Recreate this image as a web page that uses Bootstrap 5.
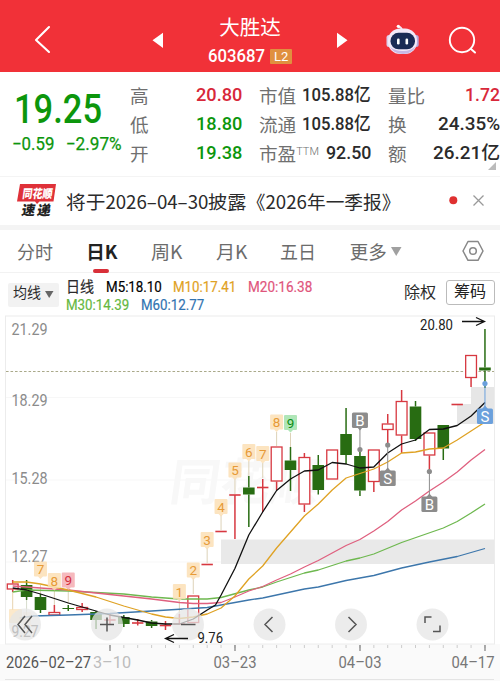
<!DOCTYPE html>
<html lang="zh-CN">
<head>
<meta charset="utf-8">
<meta name="viewport" content="width=device-width, initial-scale=1">
<title>大胜达 603687</title>
<link rel="stylesheet" href="https://cdn.jsdelivr.net/npm/bootstrap@5.3.0/dist/css/bootstrap.min.css">
<style>
body{font-family:Roboto,"Noto Sans CJK SC",sans-serif;width:500px;height:681px;overflow:hidden;color:#2b2b2b;background:#fff;line-height:1}
svg{display:block;flex:none}
.fit{display:inline-block;white-space:nowrap;transform-origin:0 50%}
.topbar{height:72px;background:#f13138;color:#fff;display:grid;grid-template-columns:150px 200px 150px}
.title-main{font-size:20.5px;height:28px;line-height:28px;margin-top:14px}
.code-row{font-size:18.5px;height:29px;font-weight:500}
.lv{background:#e0903f;width:22px;height:15px;font-size:13px;font-weight:400;margin-left:5px;border-radius:1px}
.quotes{height:104px;display:grid;grid-template-columns:130px 129px 129px 112px;padding-top:9px}
.qcol{width:112px}
.qrow{height:29px;font-size:18.6px}
.qrow .k{color:#707070;font-family:"Noto Sans CJK SC",sans-serif}
.qrow .v{font-weight:500}
.qrow sup{font-size:11px;top:-.55em;font-weight:300;font-family:Roboto,sans-serif}
.up{color:#d8283a}.down{color:#0c960c}
.price{font-size:40px;font-weight:500;height:46px;line-height:46px;margin:6px 0 0 14px}
.chg{font-size:18px;font-weight:400;-webkit-text-stroke:.25px;height:24px;line-height:24px;margin:-1px 0 0 12px}
.news{height:49px;border-top:1px solid #f4f4f4;font-family:"Noto Sans CJK SC",sans-serif;font-size:18.7px;padding-left:16px}
.band{height:5px;background:#f4f4f4}
.tabs{height:43px;border-bottom:1px solid #f2f2f2;font-family:"Noto Sans CJK SC",sans-serif;font-size:18.5px;color:#6c6c6c;gap:33.3px;padding-left:17px}
.tabs .cur{color:#222;font-weight:700;height:43px}
.cur-bar{left:7px;bottom:0;width:16px;height:4px;border-radius:2px;background:#d92f39}
.legend-row{height:42px;font-size:15px;padding-left:8px}
.ma-btn{width:51px;height:24px;background:#f2f2f2;font-size:14.5px;border-radius:2px;margin-top:1px}
.ma-list{margin-left:7px;width:260px;height:40px;padding-top:4px;-webkit-text-stroke:.2px}
.ma-list>div{height:18.5px;gap:11.5px}
.chip{width:49px;height:25px;border:1px solid #bbb;border-radius:3px;font-size:15.6px;color:#222;margin-right:5px;margin-top:-3px}
.adj{font-size:15.6px;margin-right:10px}
</style>
<script src="https://cdn.jsdelivr.net/npm/bootstrap@5.3.0/dist/js/bootstrap.bundle.min.js"></script>
</head>
<body>
<header class="topbar">
  <svg width="200" height="72" overflow="visible"><path d="M49 27 36 40 49 52" fill="none" stroke="#fff" stroke-width="2.1" stroke-linecap="round" stroke-linejoin="round"/><path d="M152.500 40.300 163 32.800V48z" fill="#fff"/></svg>
  <div class="text-center">
    <div class="title-main"><span class="fit" data-w="62">大胜达</span></div>
    <div class="code-row d-flex align-items-center justify-content-center"><span class="fit" data-w="57">603687</span><span class="lv d-flex align-items-center justify-content-center">L2</span></div>
  </div>
  <svg width="150" height="72" viewBox="350 0 150 72" overflow="visible">
    <path d="M347.500 40.300 337 32.800V48z" fill="#fff"/>
    <path d="M402 31Q402 27 398 26.500" stroke="#f4e3f3" stroke-width="1.800" fill="none"/><circle cx="398.300" cy="26.300" r="1.600" fill="#fff"/>
    <rect x="386.500" y="35" width="5" height="12" rx="2.500" fill="#ddd1ed"/><rect x="413.700" y="35" width="5" height="12" rx="2.500" fill="#b8a9dd"/>
    <rect x="388" y="28.500" width="29" height="25.500" rx="12" fill="#f3e9f8"/><path d="M390 47Q394 54 403 54T416 46Q411 51 403 51T390 47" fill="#c8b8e5"/>
    <rect x="390.500" y="32.800" width="24.500" height="16.500" rx="8" fill="#1b2b55"/>
    <rect x="397" y="38.500" width="2.600" height="6" rx="1.200" fill="#fff"/><rect x="405.500" y="38.500" width="2.600" height="6" rx="1.200" fill="#fff"/>
    <circle cx="462" cy="40" r="12.200" fill="none" stroke="#fff" stroke-width="1.900"/><path d="m471 49 4 3.500" stroke="#fff" stroke-width="2" stroke-linecap="round"/>
  </svg>
</header>

<section class="quotes">
  <div>
    <div class="price down"><span class="fit" data-w="88">19.25</span></div>
    <div class="chg down d-flex"><span class="fit" data-w="42">−0.59</span><span class="fit ms-2 ps-1" data-w="60">−2.97%</span></div>
  </div>
  <div class="qcol">
    <div class="qrow d-flex align-items-center justify-content-between"><span class="k">高</span><span class="v up fit" data-w="46">20.80</span></div>
    <div class="qrow d-flex align-items-center justify-content-between"><span class="k">低</span><span class="v down fit" data-w="46">18.80</span></div>
    <div class="qrow d-flex align-items-center justify-content-between"><span class="k">开</span><span class="v down fit" data-w="46">19.38</span></div>
  </div>
  <div class="qcol">
    <div class="qrow d-flex align-items-center justify-content-between"><span class="k">市值</span><span class="v fit" data-w="69">105.88亿</span></div>
    <div class="qrow d-flex align-items-center justify-content-between"><span class="k">流通</span><span class="v fit" data-w="69">105.88亿</span></div>
    <div class="qrow d-flex align-items-center justify-content-between"><span class="k">市盈<sup>TTM</sup></span><span class="v fit" data-w="45">92.50</span></div>
  </div>
  <div class="qcol position-relative">
    <div class="qrow d-flex align-items-center justify-content-between"><span class="k">量比</span><span class="v up fit" data-w="35">1.72</span></div>
    <div class="qrow d-flex align-items-center justify-content-between"><span class="k">换</span><span class="v fit" data-w="62">24.35%</span></div>
    <div class="qrow d-flex align-items-center justify-content-between"><span class="k">额</span><span class="v fit" data-w="67">26.21亿</span></div>
    <svg class="position-absolute end-0 bottom-0 mb-1 me-1" width="8" height="10"><path d="M8 0V8H0z" fill="#bbb"/></svg>
  </div>
</section>

<section class="news d-flex align-items-center">
  <svg width="50" height="40" viewBox="16 181 50 40" font-family="Noto Sans CJK SC, sans-serif" font-weight="900">
    <path d="M20 184H56L53.500 201.500H39.500L37 204 35 201.500H17z" fill="#df3139"/>
    <text x="22" y="0" transform="translate(36 198) skewX(-8) translate(-36)" font-size="12" fill="#fff" textLength="30" lengthAdjust="spacingAndGlyphs">同花顺</text>
    <text x="21" y="0" transform="translate(0 215) skewX(-10)" font-size="13.500" fill="#222" textLength="29" lengthAdjust="spacing">速递</text>
  </svg>
  <span class="fit" data-w="39">将于</span><span class="fit" data-w="103">2026–04–30</span><span class="fit" data-w="38">披露</span><span class="fit" data-w="19">《</span><span class="fit" data-w="42">2026</span><span class="fit" data-w="75">年一季报</span><span class="fit" data-w="19">》</span>
  <svg class="ms-auto" width="60" height="40" viewBox="440 181 60 40"><circle cx="453.300" cy="200.300" r="4" fill="#df3030"/><path d="m473.500 195.500 10 10m0-10-10 10" stroke="#999" stroke-width="1.300"/></svg>
</section>
<div class="band"></div>

<nav class="tabs d-flex align-items-center">
  <span class="fit" data-w="36">分时</span>
  <span class="cur position-relative d-flex align-items-center"><span class="fit" data-w="31">日K</span><i class="cur-bar position-absolute"></i></span>
  <span class="fit" data-w="31">周K</span>
  <span class="fit" data-w="31">月K</span>
  <span class="fit" data-w="36">五日</span>
  <span class="d-flex align-items-center"><span class="fit" data-w="37">更多</span><svg class="ms-1" width="11" height="9"><path d="M0 0H10.500L5.200 9z" fill="#a0a0a0"/></svg></span>
  <svg class="ms-auto" width="38" height="24" viewBox="462 240 38 24" fill="none" stroke="#888" stroke-width="1.500" stroke-linejoin="round"><path d="M468 242.500H478L483 252 478 261.300H468L463 252z"/><circle cx="473" cy="252" r="3.300"/></svg>
</nav>

<section class="legend-row d-flex align-items-center">
  <div class="ma-btn d-flex align-items-center justify-content-center"><span class="fit" data-w="28">均线</span><svg class="ms-1" width="9" height="7"><path d="M0 0H8.500L4.200 7z" fill="#666"/></svg></div>
  <div class="ma-list" id="maList">
    <div class="d-flex align-items-center"><span class="fit" data-w="28">日线</span><span class="fit text-black" data-w="56">M5:18.10</span><span class="fit" data-w="63" data-ma="1">M10:17.41</span><span class="fit" data-w="64" data-ma="2">M20:16.38</span></div>
    <div class="d-flex align-items-center"><span class="fit" data-w="63" data-ma="3">M30:14.39</span><span class="fit" data-w="63" data-ma="4">M60:12.77</span></div>
  </div>
  <span class="ms-auto adj"><span class="fit" data-w="32">除权</span></span>
  <div class="chip d-flex align-items-center justify-content-center"><span class="fit" data-w="32">筹码</span></div>
</section>

<svg id="chart" width="500" height="366" viewBox="0 315 500 366" font-family="Roboto, 'Noto Sans CJK SC', sans-serif"></svg>

<script>
const maColors = ['#111', '#dfa224', '#df607f', '#6eb84f', '#3c76ab'];
document.querySelectorAll('[data-ma]').forEach(e => e.style.color = ['', '#dfa224', '#df557c', '#65b83f', '#3173b1'][e.dataset.ma]);
document.querySelectorAll('.fit').forEach(e => {
  const w = e.offsetWidth, t = +e.dataset.w;
  e.style.flex = 'none';
  e.style.transform = `scaleX(${t / w})`;
  e.style.marginRight = (t - w) + 'px';
});

let out = '';
const X = i => 12.7 + 13.89 * i;
const line = (x1, y1, x2, y2, c, w = 1, extra = '') => out += `<line x1="${x1}" y1="${y1}" x2="${x2}" y2="${y2}" stroke="${c}" stroke-width="${w}" ${extra}/>`;
const rect = (x, y, w, h, f, extra = '') => out += `<rect x="${x}" y="${y}" width="${w}" height="${h}" fill="${f}" ${extra}/>`;
const text = (x, y, s, size, fill, len, extra = '') => out += `<text x="${x}" y="${y}" font-size="${size}" fill="${fill}" ${len ? `textLength="${len}" lengthAdjust="spacingAndGlyphs"` : ''} ${extra}>${s}</text>`;

// frame, grid and axis strip
rect(0, 644, 500, 37, '#fafafa');
rect(5.5, 316, 489, 328, '#fff', 'stroke="#ececec"');
[397.5, 480, 562].forEach(y => line(6, y, 494, y, '#f7f7f7'));
out += '<g transform="translate(168 500) skewX(-8)">';
text(0, 0, '同花顺', 50, '#f8f8f8', 150, 'font-weight="700"');
out += '</g>';
rect(221, 539.500, 273, 24.500, '#e9e9e9');
rect(457, 404, 37, 20, '#e6e6e6');
rect(471, 387, 23, 17, '#e6e6e6');
line(6, 371.5, 494, 371.5, '#aaa98a', 1, 'stroke-dasharray="2.6 1.9"');
for (let i = 7; i < 35; i++) line(X(i), 645, X(i), 648, '#ccc');
[110, 235, 360, 485].forEach(x => line(x, 645, x, 651, '#888', 1.3));
line(5, 679.5, 494, 679.5, '#e4e4e4');

[['21.29', 335], ['18.29', 406], ['15.28', 484.3], ['12.27', 562]].forEach(([s, y]) => text(11.5, y, s, 17, '#8b8b8b', 36));

// [index, colour, high, bodyTop, bodyBottom, low]
const candles = [
[0,'r',580,583.5,589.5,592],[1,'g',580,585,597,600],[2,'g',594,597,610,613],[3,'r',605,612,615.5,615.5],[4,'g',605,608,609,611],[5,'r',603,607,610,612],[6,'g',611,612,620,629],[7,'r',614,620,620,625],[8,'g',615,617,624,627],[9,'r',619,623,623,625.5],[10,'g',620,621.5,626,628],[11,'r',621,625.5,625.5,630],[12,'r',614,624,624,625],[13,'r',595.5,595.5,623,623],[14,'r',564.5,564.5,564.5,564.5],[15,'r',531.5,531.5,531.5,531.5],[16,'r',495,495,495,539],[17,'g',476,487.5,494.5,527],[18,'r',479,487.5,487.5,512],[19,'r',446.5,446.5,481.5,490],[20,'g',447,460.5,470,491],[21,'r',453,457,504.5,512],[22,'g',455,465,490,494.5],[23,'r',449.5,449.5,479.5,479.5],[24,'g',408,434,455,464],[25,'g',450,456,490.5,496],[26,'r',449.5,449.5,482,492],[27,'r',414,423.5,430,445],[28,'r',390,401,435.5,453],[29,'g',401,406.5,439,441],[30,'r',432.5,432.5,455.5,471],[31,'g',425,425,448.5,460],[32,'r',404.5,404.5,404.5,404.5],[33,'r',355,355,378,387],[34,'g',329,367.5,370.5,388]];

// stems from the count tags to their candles
[[7,2,585,596],[8,3,590,605],[9,4,590,604],[1,12,600,614],[2,13,578,594],[3,14,548,563],[4,15,515,530],[5,16,479,494],[6,17,461,476],[7,18,463,478],[8,19,432,446],[9,20,433,447]].forEach(([n,i,a,b]) => line(X(i), a, X(i), b, '#ddd2b8'));
line(X(0), 590, X(0), 610, '#e8d3ae'); line(X(1), 600, X(1), 615, '#d6dccc');

candles.forEach(([i, c, h, t, b, l]) => {
  const x = X(i), col = c === 'r' ? '#d73840' : '#286c12';
  if (t === b) { line(x - 5.7, t, x + 5.7, t, col, 1.6); line(x, h, x, l, col, 1.5); return; }
  line(x, h, x, t, col, 1.5); line(x, b, x, l, col, 1.5);
  if (c === 'r') rect(x - 5.4, t + .5, 10.8, Math.max(b - t - 1, 2), '#fff', `stroke="${col}" stroke-width="1.3"`);
  else rect(x - 5.8, t, 11.6, b - t, col);
});

const averages = [
[[0,588],[1,590],[2,594],[4,603],[6,611],[7,615],[8,617.5],[9,620],[10,623],[11,624],[12,624],[13,619],[14,610],[14.6,605],[15,595],[16,568.5],[17,535],[18,512],[19,490.5],[20,479],[21,471],[22,470],[23,462.5],[24,464],[25,468],[26,467],[27,453],[28,444],[29,440],[30,429.5],[31,429],[32,425.5],[33,416],[34,402.5]],
[[0,582],[1,582],[2,584],[4,590],[6,597],[8,606],[10,614],[11,617],[12,618.5],[13,617],[14,614],[15,608],[16,596],[17,579],[18,566],[19,548],[20,532],[21,516],[22,504],[23,490],[24,478],[25,473.5],[26,469],[27,462],[28,453],[29,452],[30,449],[31,448],[32,440],[33,431],[34,422]],
[[0,586],[2,588],[4,590],[6,593],[8,596],[10,599],[12,602.5],[13,603.5],[14,603.5],[15,602.5],[16,597],[17,591],[18,586.5],[19,580],[20,574],[21,567],[22,560.5],[23,553],[24,545.5],[25,539.5],[26,531],[27,521.5],[28,510],[29,501],[30,491],[31,482],[32,472],[33,460],[34,449.5]],
[[0,592],[1,590],[4,591],[8,594],[10,597],[12,599],[14,599],[15,597.5],[17,590],[18,587],[19,582],[21,573],[22,570],[24,561],[25,558],[26,554],[28,542.5],[31,528],[32,521.5],[33,513],[34,504]],
[[.5,618],[1.5,616],[4,615],[7,613.5],[10,611],[14,607.5],[17,600],[18,598],[21,589],[22,587],[24,580.5],[25,578],[26,575.5],[28,568],[30,562],[32,556.5],[34,548.5]]];
[4, 3, 2, 1, 0].forEach(k => out += `<polyline points="${averages[k].map(p => X(p[0]).toFixed(1) + ',' + p[1]).join(' ')}" fill="none" stroke="${maColors[k]}" stroke-width="1.3" stroke-linejoin="round"/>`);

// numbered count tags: [label, index, centre y, background, text colour]
const O = ['#fbdfb5', '#e79a36'];
[['7',2,569.5,...O],['8',3,581,...O],['9',4,580.5,'#f5adb2','#d3303f'],['1',12,592,...O],['2',13,570.5,...O],['3',14,540,...O],['4',15,507,...O],['5',16,470.5,...O],['6',17,452,...O],['7',18,454,...O],['8',19,422.5,...O],['9',20,423,'#a2e2ac','#0a8d14']].forEach(([s,i,y,bg,fg]) => {
  const x = X(i);
  out += `<path d="M${x-5.5} ${y-8}h11q1 0 1 1v13q0 1-1 1h-3l-2.500 2.500-2.500-2.500h-3q-1 0-1-1v-13q0-1 1-1z" fill="${bg}" fill-opacity=".85"/>`;
  text(x, y + 4.7, s, 13.5, fg, 0, 'text-anchor="middle"');
});
rect(9, 609, 13, 14, '#fbdfb5', 'opacity=".7" rx="1"');
rect(23, 612, 8, 14, '#fbdfb5', 'opacity=".35" rx="1"');

// trade markers: [letter, index, box centre y, anchor y, colour]
[['B',25,420,449.5,'#8c8c8c'],['S',27,478,445,'#8c8c8c'],['B',30,504,471.5,'#8c8c8c'],['S',34,416,383.5,'#6ba0dc']].forEach(([s,i,y,a,c]) => {
  const x = X(i), d = a > y ? 1 : -1;
  line(x, a, x, y, c, 1);
  out += `<circle cx="${x}" cy="${a}" r="2.600" fill="${c}"/><path d="M${x-3} ${y+d*7}L${x} ${y+d*10.5}L${x+3} ${y+d*7}z" fill="${c}"/>`;
  rect(x - 8, y - 7.5, 16, 15.5, c, 'rx="1.500"');
  text(x, y + 5.5, s, 15, '#fff', 0, 'text-anchor="middle"');
});

// extreme price call-outs
text(420, 329.500, '20.80', 14.5, '#222', 33);
out += '<path d="M462 321.500H484M476 317.500 484.500 321.500 476 325.500" fill="none" stroke="#111" stroke-width="1.300"/>';

// round chart controls
[25, 107, 188, 269.5, 351, 432.5].forEach(x => out += `<circle cx="${x}" cy="624.500" r="16" fill="#e6e6e6" fill-opacity=".75"/>`);
text(11.5, 637, '9.27', 17, '#c0c0c0', 27);
text(197.500, 643, '9.76', 14.5, '#222', 25.500);
out += '<path d="M188 638.500H166M174 634.500 165.500 638.500 174 642.500" fill="none" stroke="#111" stroke-width="1.300"/>';
out += '<g fill="none" stroke="#555" stroke-width="1.500"><path d="M25 616 18 624.500 25 633M32 616 25 624.500 32 633M100 624.500H114M107 617.500V631.500M181 624.500H195.500M272.500 617 265 624.500 272.500 632M348.500 617 356 624.500 348.500 632M425 623V617H431.500M440 625.500V631.500H433"/></g>';

text(93, 668, '3–10', 16.5, '#bdbdbd', 38);
text(6, 668, '2026–02–27', 16.5, '#555', 85);
text(213.5, 668, '03–23', 16.5, '#777', 43);
text(338.5, 668, '04–03', 16.5, '#777', 43);
text(451.5, 668, '04–17', 16.5, '#777', 43);
document.getElementById('chart').innerHTML = out;
</script>
</body>
</html>
